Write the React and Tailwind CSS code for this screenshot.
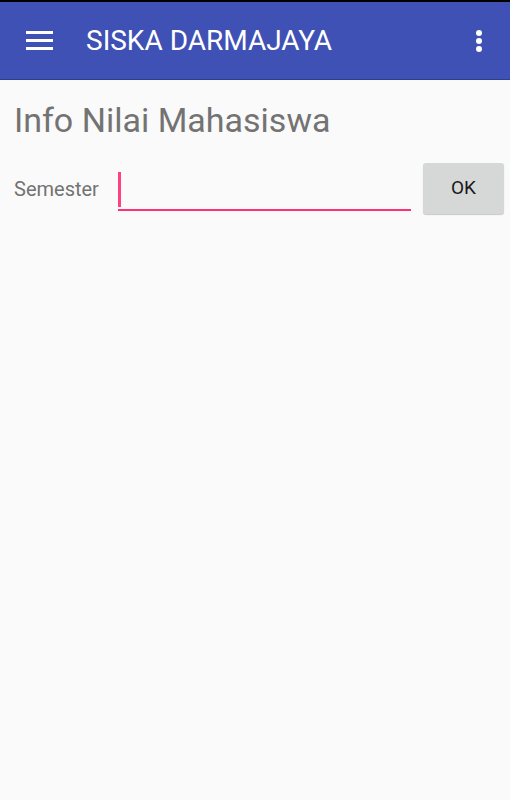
export default function App() {
  return (
    <div className="w-[510px] h-[800px] bg-[#fafafa] flex flex-col" style={{ fontFamily: "Roboto, 'Liberation Sans', sans-serif" }}>
      <div className="h-[2px] bg-black" />
      <div className="h-[78px] bg-[#3f51b5] flex items-center pl-[26px] pr-[28px] border-b border-[#2f3d94]">
        <div className="flex flex-col gap-[5.5px] w-[27px]">
          <div className="h-[2.5px] bg-white" />
          <div className="h-[2.5px] bg-white" />
          <div className="h-[2.5px] bg-white" />
        </div>
        <div className="ml-[33px] text-white text-[28px] leading-none flex-1">SISKA DARMAJAYA</div>
        <div className="flex flex-col gap-[2px] items-center">
          <div className="w-[6px] h-[6px] rounded-full bg-white" />
          <div className="w-[6px] h-[6px] rounded-full bg-white" />
          <div className="w-[6px] h-[6px] rounded-full bg-white" />
        </div>
      </div>
      <div className="pl-[14px] pr-[6px] pt-[20px]">
        <div className="text-[34px] leading-[40px] text-[#737373]">Info Nilai Mahasiswa</div>
        <div className="flex items-center mt-[23px]">
          <div className="text-[20px] text-[#737373] w-[104px] shrink-0">Semester</div>
          <div className="w-[293px] h-[46px] relative shrink-0">
            <div className="absolute left-0 top-[6px] w-[2.5px] h-[35px] bg-[#ff4081]" />
            <div className="absolute left-0 right-0 bottom-[1px] h-[2px] bg-[#ff2f78]" />
          </div>
          <div className="ml-[12px] w-[81px] h-[51px] shrink-0 rounded-[3px] bg-[#d6d7d7] shadow-[0_1px_1px_rgba(0,0,0,0.2)] flex items-center justify-center text-[19px] text-[#1a1a1a]">OK</div>
        </div>
      </div>
    </div>
  );
}
